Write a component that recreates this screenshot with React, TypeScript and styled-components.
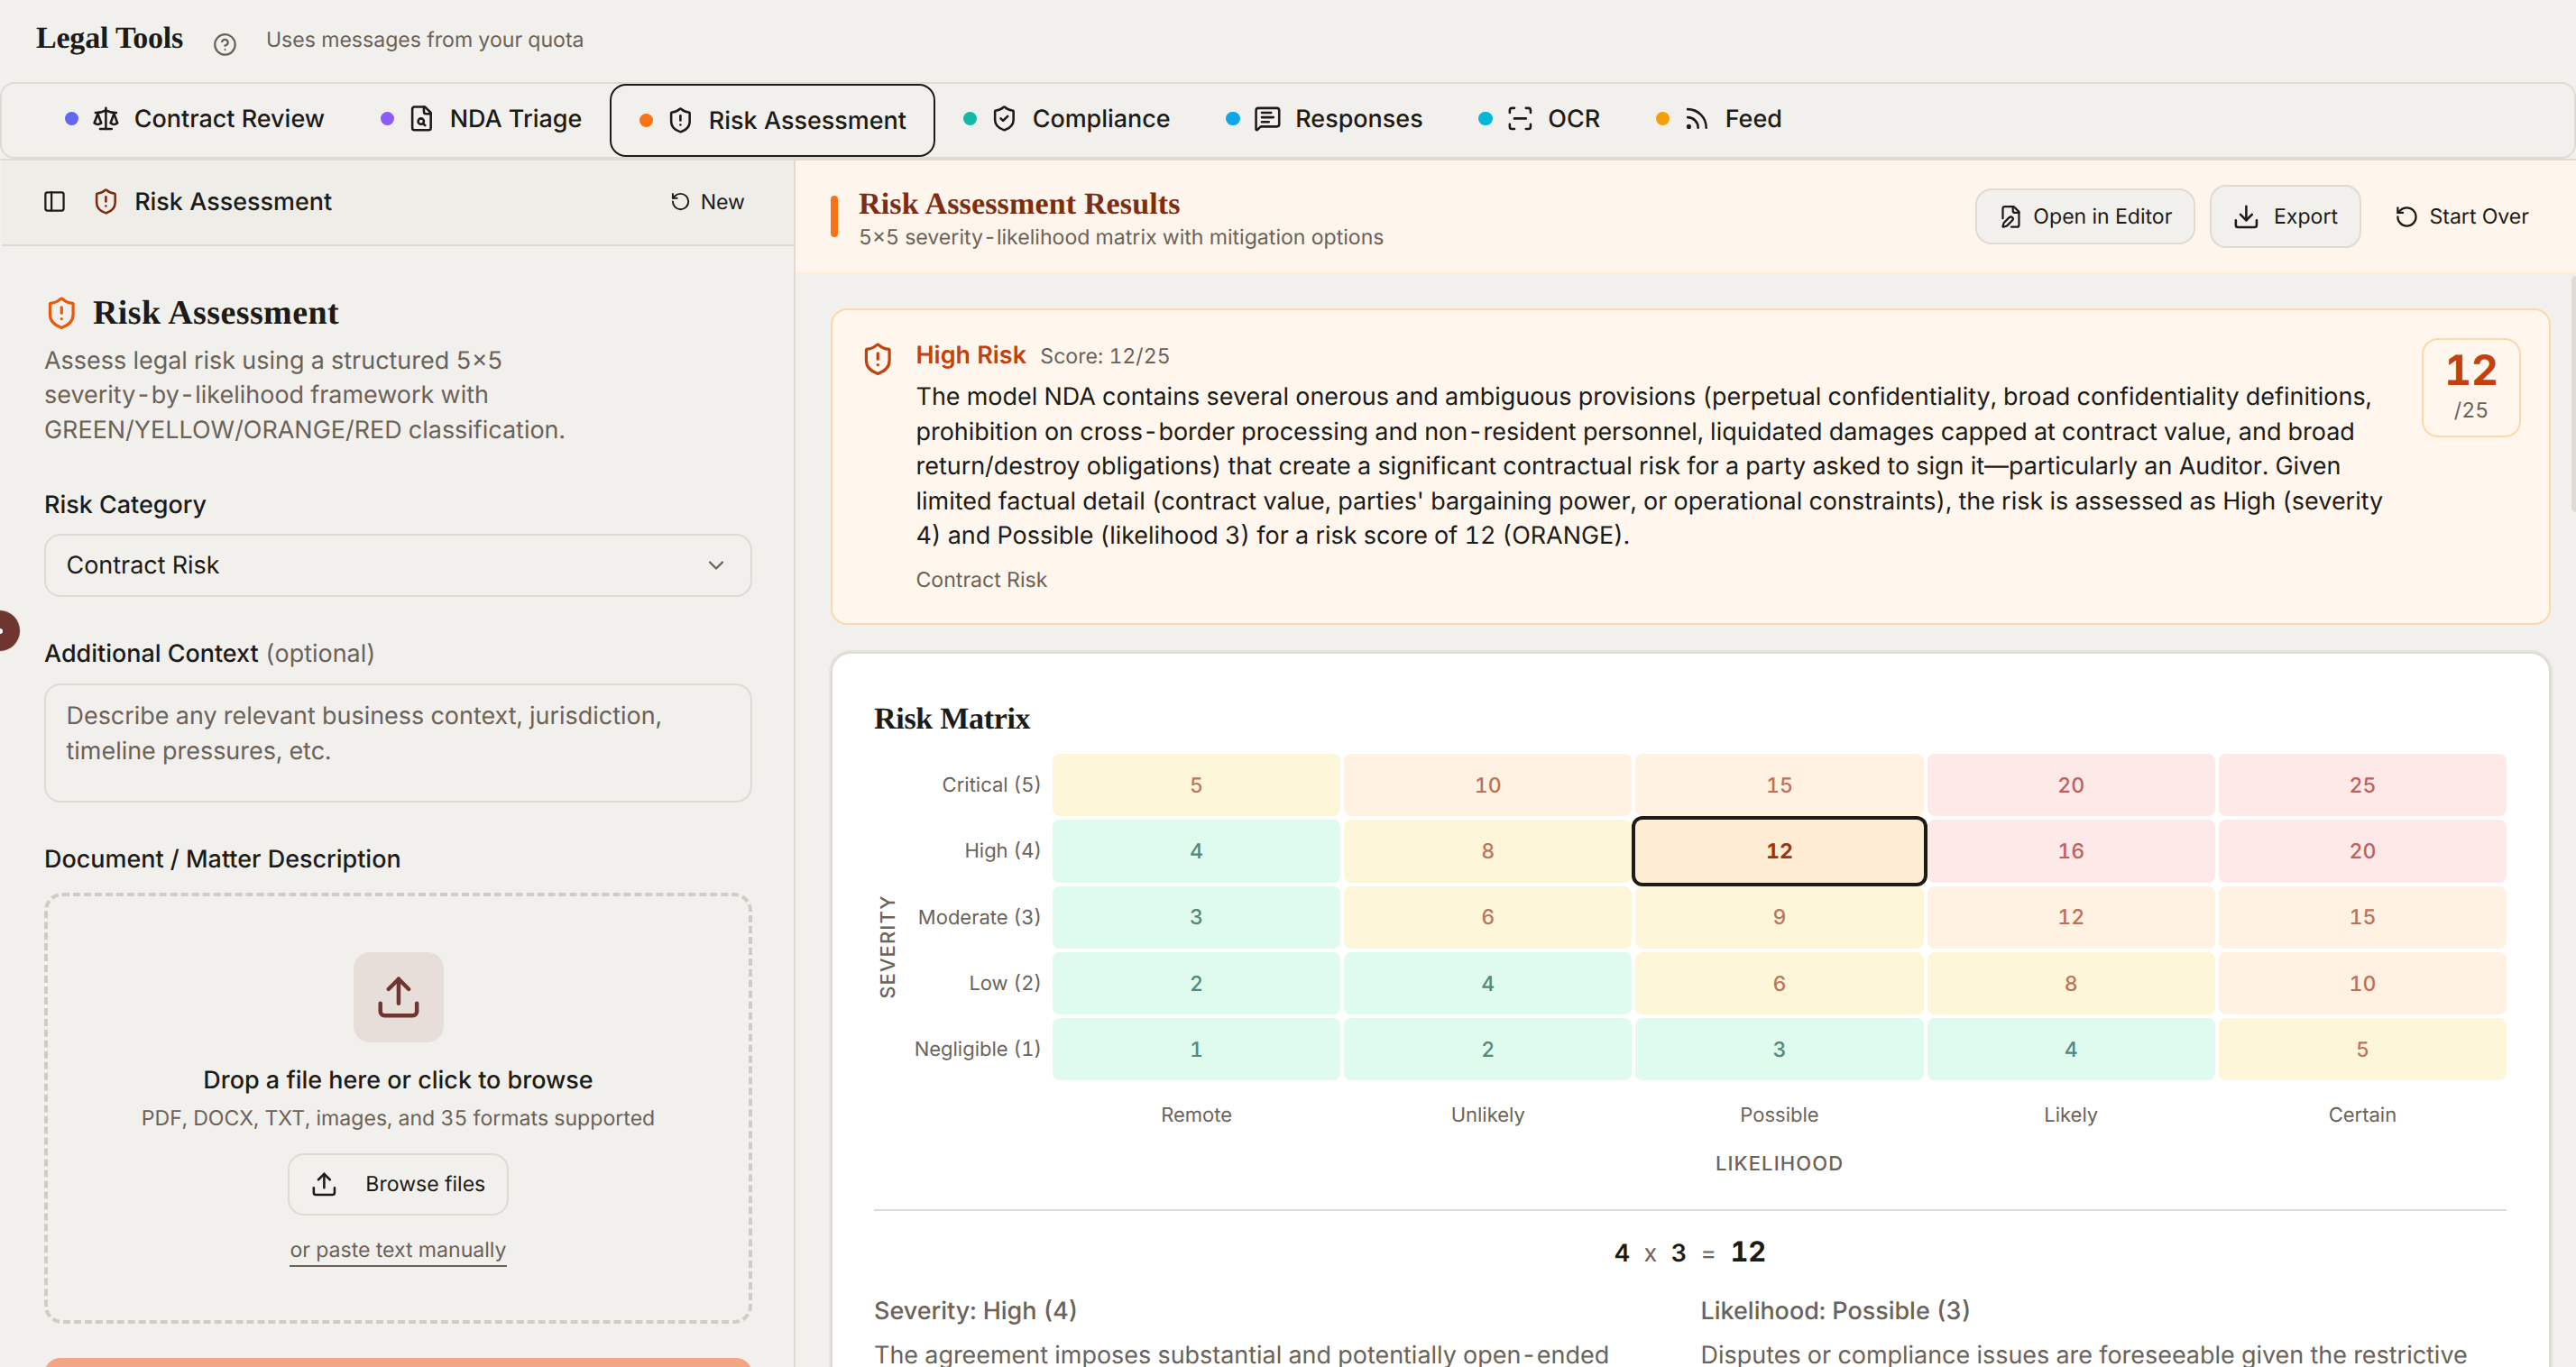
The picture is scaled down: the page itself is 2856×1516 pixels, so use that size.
import React from "react";
import styled, { createGlobalStyle, css } from "styled-components";
import {
  CircleHelp, Scale, ShieldAlert, ShieldCheck, MessageSquareText, ScanLine, Rss,
  PanelLeft, RotateCcw, ChevronDown, Upload, Download,
} from "lucide-react";

const Global = createGlobalStyle`
  *, *::before, *::after { box-sizing: border-box; }
  html, body { margin: 0; height: 1516px; overflow: hidden; background: #f2f0ed; }
  body {
    font-family: Inter, "Liberation Sans", sans-serif;
    font-variant-numeric: tabular-nums;
    text-rendering: geometricPrecision;
    color: #1c1b17;
    -webkit-font-smoothing: antialiased;
  }
  button { font: inherit; color: inherit; background: none; border: 0; margin: 0; padding: 0; font-variant-numeric: inherit; text-rendering: inherit; }
  h1, h2, h3, p { margin: 0; }
  svg { flex: none; display: block; }
`;

const ink = "#1c1b17";
const muted = "#6b6258";
const line = "#e0dad5";
const sm = "26.95px";
const xs = "23.1px";

const serif = css`
  font-family: "Liberation Serif", serif;
  font-weight: 700;
  white-space: nowrap;
`;

const Page = styled.div`
  width: 2856px; height: 1516px; overflow: hidden; display: flex; flex-direction: column;
  background: #f2f0ed; position: relative;
`;

const TopBar = styled.header`
  height: 91px; flex: none; display: flex; align-items: center; padding: 0 40px 6px;
`;
const Brand = styled.h1`
  ${serif} font-size: 34px; line-height: 40px; width: 164px; letter-spacing: -0.2px; color: ${ink};
`;
const HelpSlot = styled.span`
  display: flex; margin: 14px 0 0 32px; color: ${muted};
`;
const Quota = styled.span`
  margin-left: 32px; padding-top: 2px; font-size: ${xs}; color: ${muted};
`;

const TabStrip = styled.div` flex: none; border-bottom: 2px solid ${line}; `;
const TabBar = styled.nav`
  height: 85px; border: 2px solid ${line}; border-radius: 16px; display: flex; padding: 0 39px;
`;
const Tab = styled.button<{ $active?: boolean }>`
  display: flex; align-items: center; height: 81px; padding: 0 30.8px 4px;
  font-size: ${sm}; font-weight: 500; color: ${ink}; white-space: nowrap;
  ${(p) => p.$active && css`border: 2px solid ${ink}; border-radius: 18px; padding: 0 30px 0 30.8px;`}
`;
const Dot = styled.i<{ $color: string }>`
  width: 15.4px; height: 15.4px; border-radius: 50%; background: ${(p) => p.$color}; margin-right: 15px;
`;
const TabText = styled.span` margin-left: 15.8px; `;

const Body = styled.div` flex: 1; display: flex; min-height: 0; `;

const Side = styled.aside`
  width: 882px; flex: none; border-right: 2px solid ${line}; display: flex; flex-direction: column; min-height: 0; overflow: hidden;
`;
const SideHead = styled.div`
  height: 95px; flex: none; display: flex; align-items: center; margin-left: 2px; padding: 0 54px 2px 45px;
  background: #efede8; border-bottom: 2px solid ${line};
`;
const SideTitle = styled.span` margin-left: 16px; font-size: ${sm}; font-weight: 500; `;
const Brick = styled.span` display: flex; color: #7c2d12; margin-left: 28.4px; `;
const NewButton = styled.button`
  margin-left: auto; display: flex; align-items: center; gap: 11px; font-size: ${xs}; font-weight: 400;
`;

const Form = styled.div` padding: 52px 46px 0 49px; display: flex; flex-direction: column; `;
const FormTitle = styled.div` display: flex; align-items: center; gap: 15.4px; height: 44px; color: #ea580c; `;
const FormHeading = styled.h2` ${serif} font-size: 38px; letter-spacing: 0.4px; color: ${ink}; `;
const Lead = styled.p`
  margin: 11.6px 0 -0.6px; font-size: ${sm}; line-height: 38.5px; color: ${muted}; width: 640px;
`;
const Label = styled.label<{ $top: number }>`
  margin-top: ${(p) => p.$top}px; font-size: ${sm}; line-height: 40px; font-weight: 500;
  span { font-weight: 400; color: ${muted}; }
`;
const Select = styled.div`
  margin-top: 12px; height: 70px; border: 2px solid ${line}; border-radius: 18px; padding: 0 24px 0 22.5px;
  display: flex; align-items: center; justify-content: space-between; font-size: ${sm};
  svg { color: ${muted}; }
`;
const TextArea = styled.div`
  margin-top: 13px; height: 132px; border: 2px solid ${line}; border-radius: 18px; padding: 15px 22.5px;
  font-size: ${sm}; line-height: 38.5px; color: ${muted};
`;
const DropZone = styled.div`
  margin-top: 17.5px; height: 478px; border: 4px dashed #d1cbc6; border-radius: 20px;
  display: flex; flex-direction: column; align-items: center; padding-top: 62px;
`;
const UploadTile = styled.div`
  width: 100px; height: 100px; border-radius: 18px; background: #e7deda; color: #6f3531;
  display: flex; align-items: center; justify-content: center;
`;
const DropTitle = styled.div` margin-top: 21.7px; font-size: ${sm}; line-height: 40px; font-weight: 500; `;
const DropHint = styled.div` margin-top: 5.3px; font-size: ${xs}; line-height: 34px; color: ${muted}; `;
const Browse = styled.button`
  margin-top: 22px; width: 245px; height: 69px; border: 2px solid ${line}; border-radius: 18px;
  display: flex; align-items: center; padding-left: 22.5px; gap: 31px; font-size: ${xs}; font-weight: 400;
`;
const Paste = styled.a`
  margin-top: 21px; font-size: ${xs}; line-height: 34px; border-bottom: 2px solid ${muted}; color: ${muted};
`;
const Submit = styled.div`
  margin-top: 38px; height: 90px; border-radius: 18px; background: #f3a585;
`;

const Main = styled.main` flex: 1; min-width: 0; display: flex; flex-direction: column; `;
const ResultHead = styled.div`
  height: 126px; flex: none; background: #fef6ec; border-bottom: 2px solid #ffedd5;
  display: flex; align-items: center; padding: 0 52px 0 39px;
`;
const Accent = styled.i` width: 8px; height: 46px; border-radius: 4px; background: #f97316; `;
const ResultTitles = styled.div` margin-left: 23px; padding-top: 8px; `;
const ResultTitle = styled.h2` ${serif} font-size: 34px; line-height: 38px; letter-spacing: 0.15px; color: #7c2d12; `;
const ResultSub = styled.p` font-size: ${xs}; line-height: 34px; color: ${muted}; `;
const Actions = styled.div` margin-left: auto; display: flex; align-items: center; gap: 15.4px; `;
const Action = styled.button<{ $w?: number; $h?: number; $gap: number; $plain?: boolean }>`
  display: flex; align-items: center; justify-content: center; gap: ${(p) => p.$gap}px;
  font-size: ${xs}; font-weight: 400; white-space: nowrap;
  width: ${(p) => (p.$w ? p.$w + "px" : "auto")}; height: ${(p) => p.$h || 62}px;
  ${(p) => p.$plain ? css`margin-left: 22px;` : css`border: 2px solid ${line}; border-radius: 18px; background: #f2f0ed;`}
`;

const Scroll = styled.div`
  flex: 1; min-height: 0; overflow: hidden; padding: 38px 0 0 39px; display: flex; justify-content: space-between;
`;
const Cards = styled.div` width: 1907px; flex: none; display: flex; flex-direction: column; `;
const Thumb = styled.i`
  width: 5px; height: 262px; margin-top: -36px; border-radius: 5px 0 0 5px; background: ${line};
`;
const Summary = styled.section`
  height: 351px; flex: none; border: 2px solid #fed7aa; border-radius: 18px; background: #fff7ed; padding: 31px 31px 0 31px;
  display: flex; align-items: flex-start;
`;
const SummaryIcon = styled.span` margin-top: 4px; color: #c2410c; `;
const SummaryText = styled.div` margin-left: 23px; width: 1640px; `;
const SummaryHead = styled.div`
  display: flex; align-items: baseline; gap: 15.4px; height: 46.3px; line-height: 37px;
  font-size: ${xs}; color: ${muted};
  b { font-size: ${sm}; font-weight: 600; color: #c2410c; }
`;
const Para = styled.p` font-size: ${sm}; line-height: 38.5px; white-space: nowrap; `;
const Cat = styled.p` margin-top: 12.7px; font-size: ${xs}; line-height: 34px; color: ${muted}; `;
const Score = styled.div`
  margin-left: auto; width: 110px; height: 110px; border: 2px solid #fed7aa; border-radius: 18px;
  display: flex; flex-direction: column; align-items: center; color: ${muted}; font-size: ${xs}; line-height: 34px;
  b { font-size: 46.2px; line-height: 48px; margin-top: 10px; margin-bottom: 3px; font-weight: 700; color: #c2410c; }
`;

const MatrixCard = styled.section`
  margin: 30px 0 0 0; width: 1907px; padding: 51px 47px 0 46px;
  flex: none; height: 840px; border: 2px solid #dfdad5; border-radius: 22px; background: #fff;
  box-shadow: 0 0 0 2px #e5e3df;
`;
const MatrixTitle = styled.h3` ${serif} font-size: 34px; line-height: 43px; letter-spacing: -0.3px; `;
const MatrixRow = styled.div` display: flex; margin-top: 17px; `;
const AxisY = styled.div`
  width: 32px; flex: none; display: flex; align-items: center; justify-content: center;
  writing-mode: vertical-rl; transform: rotate(180deg); padding-top: 7px;
  font-size: 22px; font-weight: 500; letter-spacing: 1.1px; color: ${muted};
`;
const Grid = styled.div`
  flex: 1; display: grid; grid-template-columns: 162px repeat(5, 1fr); grid-auto-rows: 69.3px; gap: 4px;
`;
const RowLabel = styled.div`
  display: flex; align-items: center; justify-content: flex-end; padding: 1px 8px 0 0; font-size: 22px; color: ${muted};
`;
const palette = {
  g: ["#defbed", "#56897a"],
  y: ["#fef6d9", "#bb7660"],
  o: ["#fff2e2", "#c0705a"],
  r: ["#fee9e9", "#c0605c"],
} as const;
type Tone = keyof typeof palette;
const Cell = styled.div<{ $tone: Tone; $on?: boolean }>`
  display: flex; align-items: center; justify-content: center; border-radius: 8px; font-size: ${xs}; font-weight: 500;
  background: ${(p) => palette[p.$tone][0]}; color: ${(p) => palette[p.$tone][1]};
  ${(p) => p.$on && css`background: #ffecd5; color: #9a3412; font-weight: 700; box-shadow: 0 0 0 4px ${ink}; z-index: 1;`}
`;
const ColLabel = styled.div` text-align: center; font-size: 22px; line-height: 32px; padding-top: 19px; color: ${muted}; `;
const AxisX = styled.div`
  margin: 3px 0 0 198px; text-align: center; font-size: 22px; line-height: 32px; font-weight: 500; letter-spacing: 1.1px; color: ${muted};
`;
const Calc = styled.div`
  margin-top: 34px; border-top: 2px solid ${line}; padding-top: 24px; height: 92px;
  display: flex; justify-content: center; align-items: baseline; gap: 15.4px; font-size: ${sm}; line-height: 44px; color: ${muted};
  b { color: ${ink}; font-weight: 600; }
  strong { color: ${ink}; font-weight: 700; font-size: 30.8px; }
`;
const Reasons = styled.div` display: grid; grid-template-columns: 1fr 1fr; gap: 23.1px; margin-top: 1px; `;
const Reason = styled.div`
  font-size: ${sm}; line-height: 39px; color: ${muted}; white-space: nowrap;
  h4 { margin: 0 0 10px; font-size: ${sm}; line-height: 39px; font-weight: 500; }
`;
const EdgeHandle = styled.button`
  position: absolute; left: -23px; top: 677px; width: 45px; height: 45px; border-radius: 50%;
  background: #6f3531; display: flex; align-items: center; justify-content: center; box-shadow: 0 0 0 1px ${line};
  i { width: 6px; height: 6px; border-radius: 50%; background: #fff; }
`;

type GlyphProps = { size: number; strokeWidth: number };
const glyph = (size: number, strokeWidth: number) => ({
  width: size, height: size, viewBox: "0 0 24 24", fill: "none", stroke: "currentColor",
  strokeWidth, strokeLinecap: "round" as const, strokeLinejoin: "round" as const,
});
const DocSearch = ({ size, strokeWidth }: GlyphProps) => (
  <svg {...glyph(size, strokeWidth)}>
    <path d="M15 2H6a2 2 0 0 0-2 2v16a2 2 0 0 0 2 2h12a2 2 0 0 0 2-2V7Z" />
    <path d="M14 2v4a2 2 0 0 0 2 2h4" />
    <circle cx="11.5" cy="14.5" r="2.5" />
    <path d="M13.3 16.3 15 18" />
  </svg>
);
const DocPen = ({ size, strokeWidth }: GlyphProps) => (
  <svg {...glyph(size, strokeWidth)}>
    <path d="M12.5 22H18a2 2 0 0 0 2-2V7l-5-5H6a2 2 0 0 0-2 2v9.5" />
    <path d="M14 2v4a2 2 0 0 0 2 2h4" />
    <path d="M13.378 15.626a1 1 0 1 0-3.004-3.004l-5.01 5.012a2 2 0 0 0-.506.854l-.837 2.87a.5.5 0 0 0 .62.62l2.87-.837a2 2 0 0 0 .854-.506z" />
  </svg>
);

const tabs = [
  { label: "Contract Review", color: "#6366f1", Icon: Scale },
  { label: "NDA Triage", color: "#8b5cf6", Icon: DocSearch },
  { label: "Risk Assessment", color: "#f97316", Icon: ShieldAlert, active: true },
  { label: "Compliance", color: "#14b8a6", Icon: ShieldCheck },
  { label: "Responses", color: "#0ea5e9", Icon: MessageSquareText },
  { label: "OCR", color: "#06b6d4", Icon: ScanLine },
  { label: "Feed", color: "#f59e0b", Icon: Rss },
];

const rows: { label: string; tones: string; factor: number }[] = [
  { label: "Critical (5)", tones: "yoorr", factor: 5 },
  { label: "High (4)", tones: "gyorr", factor: 4 },
  { label: "Moderate (3)", tones: "gyyoo", factor: 3 },
  { label: "Low (2)", tones: "ggyyo", factor: 2 },
  { label: "Negligible (1)", tones: "ggggy", factor: 1 },
];
const cols = ["Remote", "Unlikely", "Possible", "Likely", "Certain"];

export default function App() {
  return (
    <Page>
      <Global />
      <TopBar>
        <Brand>Legal Tools</Brand>
        <HelpSlot><CircleHelp size={26.95} strokeWidth={2} /></HelpSlot>
        <Quota>Uses messages from your quota</Quota>
      </TopBar>
      <TabStrip>
        <TabBar>
          {tabs.map(({ label, color, Icon, active }) => (
            <Tab key={label} $active={active}>
              <Dot $color={color} />
              <Icon size={30.8} strokeWidth={2} />
              <TabText>{label}</TabText>
            </Tab>
          ))}
        </TabBar>
      </TabStrip>
      <Body>
        <Side>
          <SideHead>
            <PanelLeft size={26.95} strokeWidth={2} />
            <Brick><ShieldAlert size={30.8} strokeWidth={2} /></Brick>
            <SideTitle>Risk Assessment</SideTitle>
            <NewButton><RotateCcw size={23.1} strokeWidth={2} />New</NewButton>
          </SideHead>
          <Form>
            <FormTitle>
              <ShieldAlert size={38.5} strokeWidth={2} />
              <FormHeading>Risk Assessment</FormHeading>
            </FormTitle>
            <Lead>Assess legal risk using a structured 5×5<br />severity-by-likelihood framework with<br />GREEN/YELLOW/ORANGE/RED classification.</Lead>
            <Label $top={44}>Risk Category</Label>
            <Select>Contract Risk<ChevronDown size={28} strokeWidth={2} /></Select>
            <Label $top={43.5}>Additional Context <span>(optional)</span></Label>
            <TextArea>Describe any relevant business context, jurisdiction,<br />timeline pressures, etc.</TextArea>
            <Label $top={42.5}>Document / Matter Description</Label>
            <DropZone>
              <UploadTile><Upload size={53.9} strokeWidth={2} /></UploadTile>
              <DropTitle>Drop a file here or click to browse</DropTitle>
              <DropHint>PDF, DOCX, TXT, images, and 35 formats supported</DropHint>
              <Browse><Upload size={30.8} strokeWidth={2} />Browse files</Browse>
              <Paste>or paste text manually</Paste>
            </DropZone>
            <Submit />
          </Form>
        </Side>
        <Main>
          <ResultHead>
            <Accent />
            <ResultTitles>
              <ResultTitle>Risk Assessment Results</ResultTitle>
              <ResultSub>5×5 severity-likelihood matrix with mitigation options</ResultSub>
            </ResultTitles>
            <Actions>
              <Action $w={244} $gap={11.5}><DocPen size={26.95} strokeWidth={2} />Open in Editor</Action>
              <Action $w={168} $h={70} $gap={15}><Download size={30.8} strokeWidth={2} />Export</Action>
              <Action $plain $gap={11.5}><RotateCcw size={26.95} strokeWidth={2} />Start Over</Action>
            </Actions>
          </ResultHead>
          <Scroll>
            <Cards>
              <Summary>
                <SummaryIcon><ShieldAlert size={38.5} strokeWidth={2} /></SummaryIcon>
                <SummaryText>
                  <SummaryHead><b>High Risk</b>Score: 12/25</SummaryHead>
                  <Para>
                    The model NDA contains several onerous and ambiguous provisions (perpetual confidentiality, broad confidentiality definitions,<br />
                    prohibition on cross-border processing and non-resident personnel, liquidated damages capped at contract value, and broad<br />
                    return/destroy obligations) that create a significant contractual risk for a party asked to sign it—particularly an Auditor. Given<br />
                    limited factual detail (contract value, parties' bargaining power, or operational constraints), the risk is assessed as High (severity<br />
                    4) and Possible (likelihood 3) for a risk score of 12 (ORANGE).
                  </Para>
                  <Cat>Contract Risk</Cat>
                </SummaryText>
                <Score><b>12</b>/25</Score>
              </Summary>
              <MatrixCard>
                <MatrixTitle>Risk Matrix</MatrixTitle>
                <MatrixRow>
                  <AxisY>SEVERITY</AxisY>
                  <Grid>
                    {rows.map((r) => (
                      <React.Fragment key={r.label}>
                        <RowLabel>{r.label}</RowLabel>
                        {cols.map((c, i) => (
                          <Cell key={c} $tone={r.tones[i] as Tone} $on={r.factor === 4 && i === 2}>{r.factor * (i + 1)}</Cell>
                        ))}
                      </React.Fragment>
                    ))}
                    <span />
                    {cols.map((c) => <ColLabel key={c}>{c}</ColLabel>)}
                  </Grid>
                </MatrixRow>
                <AxisX>LIKELIHOOD</AxisX>
                <Calc><b>4</b><span>x</span><b>3</b><span>=</span><strong>12</strong></Calc>
                <Reasons>
                  <Reason><h4>Severity: High (4)</h4>The agreement imposes substantial and potentially open-ended</Reason>
                  <Reason><h4>Likelihood: Possible (3)</h4>Disputes or compliance issues are foreseeable given the restrictive</Reason>
                </Reasons>
              </MatrixCard>
            </Cards>
            <Thumb />
          </Scroll>
        </Main>
      </Body>
      <EdgeHandle><i /></EdgeHandle>
    </Page>
  );
}
